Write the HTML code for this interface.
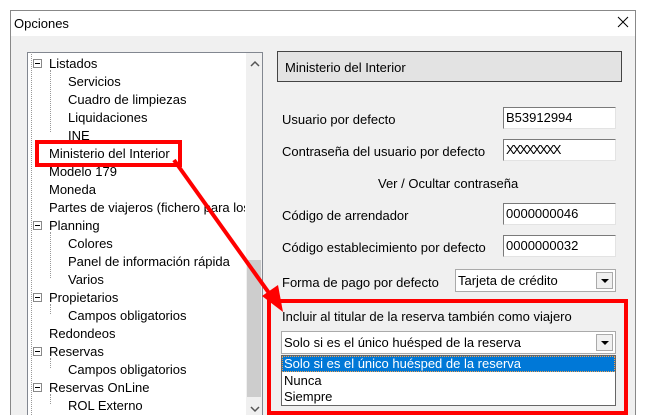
<!DOCTYPE html>
<html><head><style>
*{margin:0;padding:0;box-sizing:border-box}
html,body{width:645px;height:415px;overflow:hidden}
body{background:#fff;position:relative;font-family:"Liberation Sans",Arial,sans-serif;font-size:13px;color:#000}
.abs{position:absolute}
.win{left:10px;top:10px;width:626px;height:405px;border:1px solid #888;border-bottom:none;background:#f0f0f0}
.title{left:11px;top:11px;width:624px;height:25px;background:#fff}
.tree{left:27px;top:52px;width:236px;height:363px;background:#fff;border:1px solid #828790;border-bottom:none}
.it{position:absolute;white-space:nowrap;line-height:15px}
.inp{position:absolute;background:#fff;border:1px solid #7a7a7a;border-right-color:#e3e3e3;border-bottom-color:#e3e3e3;height:22px;padding-left:2px;line-height:19px;font-size:13px}
.lbl{position:absolute;white-space:nowrap}
.dd{position:absolute;width:17px;height:17px;background:#f0f0f0;border:1px solid #aaa;top:2px;right:2px}
.dd:after{content:"";position:absolute;left:4px;top:6px;border-left:4px solid transparent;border-right:4px solid transparent;border-top:4px solid #000}
.box{position:absolute;width:9px;height:9px;border:1px solid #888;background:#fff}
.box:after{content:"";position:absolute;left:1px;top:3px;width:5px;height:1px;background:#000}
</style></head><body>
<div class="abs win"></div>
<div class="abs title"></div>
<div class="lbl" style="left:14px;top:16px">Opciones</div>
<svg class="abs" style="left:617px;top:16px" width="12" height="12"><path d="M1 1L11 11M11 1L1 11" stroke="#000" stroke-width="1"/></svg>

<div class="abs tree"></div>
<div class="abs" style="left:31px;top:52px;height:363px;border-left:1px dotted #999"></div>
<div class="abs" style="left:246px;top:53px;width:16px;height:362px;background:#f0f0f0"></div>
<div class="abs" style="left:247px;top:260px;width:14px;height:137px;background:#cdcdcd"></div>
<svg class="abs" style="left:250px;top:60px" width="10" height="8"><path d="M1 6L5 2L9 6" stroke="#555" fill="none" stroke-width="1.5"/></svg>
<svg class="abs" style="left:250px;top:405px" width="10" height="8"><path d="M1 2L5 6L9 2" stroke="#555" fill="none" stroke-width="1.5"/></svg>

<div class="abs" style="left:50px;top:70px;height:62px;border-left:1px dotted #999"></div>
<div class="abs" style="left:50px;top:232px;height:46px;border-left:1px dotted #999"></div>
<div class="abs" style="left:50px;top:304px;height:10px;border-left:1px dotted #999"></div>
<div class="abs" style="left:50px;top:358px;height:10px;border-left:1px dotted #999"></div>
<div class="abs" style="left:50px;top:394px;height:10px;border-left:1px dotted #999"></div>

<div class="box" style="left:33px;top:59px"></div>
<div class="box" style="left:33px;top:221px"></div>
<div class="box" style="left:33px;top:293px"></div>
<div class="box" style="left:33px;top:347px"></div>
<div class="box" style="left:33px;top:383px"></div>

<div class="it" style="left:49px;top:56px">Listados</div>
<div class="it" style="left:68px;top:74px">Servicios</div>
<div class="it" style="left:68px;top:92px">Cuadro de limpiezas</div>
<div class="it" style="left:68px;top:110px">Liquidaciones</div>
<div class="it" style="left:68px;top:128px">INE</div>
<div class="it" style="left:49px;top:146px">Ministerio del Interior</div>
<div class="it" style="left:49px;top:164px">Modelo 179</div>
<div class="it" style="left:49px;top:182px">Moneda</div>
<div class="it" style="left:49px;top:200px;width:196px;overflow:hidden">Partes de viajeros (fichero para los</div>
<div class="it" style="left:49px;top:218px">Planning</div>
<div class="it" style="left:68px;top:236px">Colores</div>
<div class="it" style="left:68px;top:254px">Panel de información rápida</div>
<div class="it" style="left:68px;top:272px">Varios</div>
<div class="it" style="left:49px;top:290px">Propietarios</div>
<div class="it" style="left:68px;top:308px">Campos obligatorios</div>
<div class="it" style="left:49px;top:326px">Redondeos</div>
<div class="it" style="left:49px;top:344px">Reservas</div>
<div class="it" style="left:68px;top:362px">Campos obligatorios</div>
<div class="it" style="left:49px;top:380px">Reservas OnLine</div>
<div class="it" style="left:68px;top:398px">ROL Externo</div>

<div class="abs" style="left:277px;top:51px;width:345px;height:31px;background:#e3e3e3;border:1px solid #444"></div>
<div class="lbl" style="left:285px;top:60px">Ministerio del Interior</div>

<div class="lbl" style="left:282px;top:112px">Usuario por defecto</div>
<div class="inp" style="left:503px;top:107px;width:113px">B53912994</div>
<div class="lbl" style="left:282px;top:144px">Contraseña del usuario por defecto</div>
<div class="inp" style="left:503px;top:139px;width:113px;letter-spacing:-2px">XXXXXXXX</div>
<div class="lbl" style="left:378px;top:176px">Ver / Ocultar contraseña</div>
<div class="lbl" style="left:282px;top:208px">Código de arrendador</div>
<div class="inp" style="left:503px;top:203px;width:113px">0000000046</div>
<div class="lbl" style="left:282px;top:240px">Código establecimiento por defecto</div>
<div class="inp" style="left:503px;top:235px;width:113px">0000000032</div>
<div class="lbl" style="left:282px;top:275px">Forma de pago por defecto</div>
<div class="inp" style="left:455px;top:269px;width:161px;height:23px;border:1px solid #aaa;line-height:21px">Tarjeta de crédito<div class="dd"></div></div>

<div class="abs" style="left:267px;top:299px;width:361px;height:116px;border:4px solid #f00"></div>
<div class="lbl" style="left:282px;top:309px">Incluir al titular de la reserva también como viajero</div>
<div class="inp" style="left:281px;top:331px;width:335px;height:23px;border:1px solid #aaa;line-height:21px">Solo si es el único huésped de la reserva<div class="dd"></div></div>
<div class="abs" style="left:281px;top:355px;width:335px;height:51px;background:#fff;border:1px solid #666"></div>
<div class="abs" style="left:282px;top:356px;width:333px;height:16px;background:#0078d7;border:1px dotted #f0a050"></div>
<div class="lbl" style="left:284px;top:356px;color:#fff">Solo si es el único huésped de la reserva</div>
<div class="lbl" style="left:284px;top:373px">Nunca</div>
<div class="lbl" style="left:284px;top:389px">Siempre</div>

<div class="abs" style="left:35px;top:140px;width:147px;height:27px;border:4px solid #f00"></div>
<svg class="abs" style="left:0;top:0" width="645" height="415">
<line x1="174" y1="160" x2="274" y2="300" stroke="#f00" stroke-width="4"/>
<polygon points="283,312 262,296 278,285" fill="#f00"/>
</svg>
</body></html>
